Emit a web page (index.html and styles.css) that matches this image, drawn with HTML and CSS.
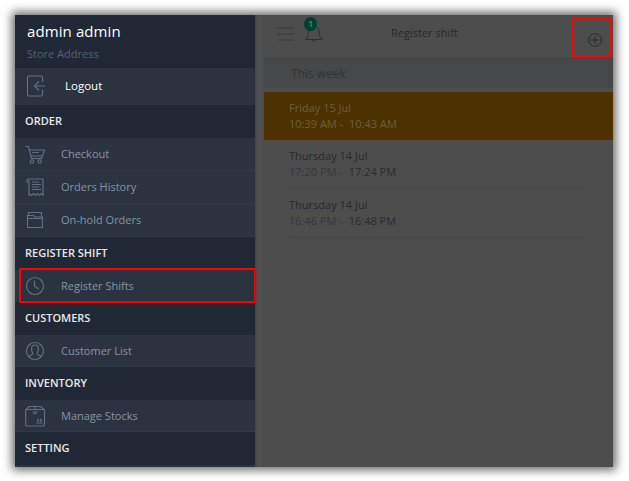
FILE: index.html
```html
<!DOCTYPE html>
<html lang="en">
<head>
<meta charset="utf-8">
<title>Register shift</title>
<link rel="stylesheet" href="styles.css">
</head>
<body>
<div class="app">
  <nav class="sidebar">
    <header class="account">
      <div class="user">admin admin</div>
      <div class="address">Store Address</div>
    </header>
    <a class="row logout">
      <svg class="icon" viewBox="0 0 22 22"><path d="M17.500 7V2.500Q17.500 1 16 1H4Q2.500 1 2.500 2.500V19.500Q2.500 21 4 21H16Q17.500 21 17.500 19.500V14.500M20 11H10M14 6.500L9.500 11L14 15.500"/></svg>
      <span>Logout</span>
    </a>
    <h2>ORDER</h2>
    <a class="row order">
      <svg class="icon" viewBox="0 0 22 22"><path d="M.5 3.500H3.500L6.500 15.500H16.500L19.500 7H4.500M7 9.500H14M6 13H17"/><circle cx="7" cy="18.500" r="1.700"/><circle cx="14.500" cy="18.500" r="1.700"/></svg>
      <span>Checkout</span>
    </a>
    <a class="row order">
      <svg class="icon" viewBox="0 0 22 22"><path d="M4 6H2V4Q2 3 3 3H18V19L16.500 17.500L14.500 19.500L12.500 17.500L10.500 19.500L8.500 17.500L6.500 19.500L5 18L4 19V4M7 6H14M7 8.500H16M7 11H14M7 13.500H16"/></svg>
      <span>Orders History</span>
    </a>
    <a class="row order">
      <svg class="icon" viewBox="0 0 22 22"><path d="M2.500 9.500H17.500V18.500H2.500ZM2.500 9.500V6.500H8L10 8H17.500V9.500M3.500 6.500V3.500H16.500V8"/></svg>
      <span>On-hold Orders</span>
    </a>
    <h2>REGISTER SHIFT</h2>
    <a class="row active">
      <svg class="icon" viewBox="0 0 22 22"><circle cx="10" cy="11" r="8.500"/><path d="M9.500 5.500V11L13.500 14"/></svg>
      <span>Register Shifts</span>
    </a>
    <h2>CUSTOMERS</h2>
    <a class="row">
      <svg class="icon" viewBox="0 0 22 22"><circle cx="10" cy="11" r="8.500"/><path d="M4 17C4.500 15 8 15 8 13.500C6 11 5.500 5 10 5C14.500 5 14 11 12 13.500C12 15 15.500 15 16 17"/></svg>
      <span>Customer List</span>
    </a>
    <h2>INVENTORY</h2>
    <a class="row">
      <svg class="icon" viewBox="0 0 22 22"><path d="M.7 5L4 1.500H16L19.500 5V20Q19.500 21 18.500 21H2Q.7 21 .7 20ZM.7 4.500H19.500M10 1.500V4.500M7.500 7H12.500M8.500 8.500H11.500M11.500 18H17.500M13 17V14.500M16 17V14.500M12.200 15.500L13 14.500L13.800 15.500M15.200 15.500L16 14.500L16.800 15.500"/></svg>
      <span>Manage Stocks</span>
    </a>
    <h2>SETTING</h2>
    <div class="row next"></div>
  </nav>
  <div class="gutter"></div>
  <main class="content">
    <header class="topbar">
      <svg class="menu" viewBox="0 0 18 14"><path d="M0 1H17M0 7H17M0 13H17"/></svg>
      <div class="notify">
        <svg class="bell" viewBox="0 0 20 20"><path d="M1.500 16.500Q4.500 14 4.500 9Q4.500 3 10 2.500Q15 3 15 9Q15 14 18.500 16.500ZM8 16.500Q10 20 12 16.500M9 2Q10 .5 11 2"/></svg>
        <span class="count">1</span>
      </div>
      <h1>Register shift</h1>
      <div class="add"><svg viewBox="0 0 14 14"><circle cx="7" cy="7" r="6.300"/><path d="M7 3V11M3 7H11"/></svg></div>
    </header>
    <div class="week">This week</div>
    <ul class="shifts">
      <li class="selected"><div class="day">Friday 15 Jul</div><div class="time">10:39 AM - <b>10:43 AM</b></div></li>
      <li><div class="day">Thursday 14 Jul</div><div class="time">17:20 PM - <b>17:24 PM</b></div></li>
      <li><div class="day">Thursday 14 Jul</div><div class="time">16:46 PM - <b>16:48 PM</b></div></li>
    </ul>
  </main>
</div>
</body>
</html>
```
FILE: styles.css
```css
* { box-sizing: border-box; }
body { margin: 0; background: #fff; font: 11px/16px "Open Sans", "Noto Sans", sans-serif; overflow: hidden; }
h1, h2, ul { margin: 0; padding: 0; font: inherit; }
svg { fill: none; stroke: currentColor; display: block; }
.app { display: flex; width: 598px; height: 452px; margin: 15px; background: #4d4d4d; box-shadow: 0 0 9px 3px rgba(0,0,0,.6); }
.sidebar { width: 240px; height: 452px; overflow: hidden; background: #2c3340; color: #8793a1; flex: none; }
.account { height: 53px; background: #212835; padding: 5px 0 0 12px; }
.user { font-size: 15px; line-height: 22px; color: #fff; letter-spacing: .1px; }
.address { line-height: 16px; margin-top: 4px; color: #566073; }
.row { display: flex; align-items: center; height: 32.5px; padding: 1px 0 0 10px; border-bottom: 1px solid #2e3b47; }
.order { height: 33.2px; }
.row span { margin-left: 14px; }
.icon { width: 22px; height: 22px; stroke-width: 1.15; color: #607080; flex: none; }
.logout { height: 37px; border: 0; padding: 0 0 1px 10px; }
.logout span { color: #fff; font-size: 11.5px; font-weight: 500; margin-left: 18px; }
h2 { height: 32.5px; padding: 8px 10px; background: #212835; color: #e8e8e8; font-weight: 600; }
.active { height: 35px; margin: -1.5px 0 -1px 4px; width: 237px; border: 2px solid #f00; padding: 0 0 0 4px; position: relative; }
.gutter { width: 9px; background: linear-gradient(90deg, #434547 1px, #515151 2px, #505050 7px, #494949); flex: none; }
.content { flex: 1; color: #26282c; }
.topbar { display: flex; position: relative; height: 44px; border-bottom: 1px solid #414243; }
.menu { width: 18px; height: 14px; margin: 12px 10px 0 13px; color: #404040; stroke-width: 1.3; }
.notify { position: relative; width: 20px; height: 20px; margin-top: 8px; }
.bell { width: 20px; height: 20px; color: #2f3137; margin-left: -1px; }
.count { position: absolute; left: -1px; top: -6px; width: 13px; height: 14px; border-radius: 50%; background: #00412e; color: #717e79; font-size: 9px; line-height: 13px; font-weight: 600; text-align: center; }
h1 { margin: 10px 0 0 66px; }
.add { width: 40px; height: 41px; border: 2px solid #f00; margin: 2px 2px 0 auto; padding: 14px 0 0 15px; color: #292b2e; }
.add svg { width: 14px; height: 14px; }
.week { height: 29px; background: #464748; padding: 7px 27px; color: #323439; font-size: 12px; }
.shifts { list-style: none; margin-top: 4px; }
li { height: 49px; margin: 0 28px 0 25px; padding-top: 8px; border-bottom: 1px solid #474747; }
.selected { height: 48px; margin: 0; padding-left: 25px; background: #4d3100; border: 0; color: #6e5d40; }
.time { color: #35373a; }
.selected .time { color: #6e5d40; }
.time b { font-weight: 400; color: #292b2f; margin-left: 3px; }
.selected b { color: inherit; }
```
